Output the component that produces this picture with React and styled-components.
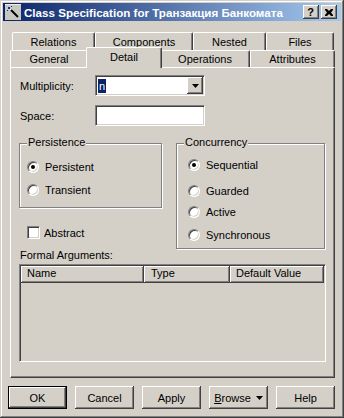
import React from 'react';
import styled, { createGlobalStyle, css } from 'styled-components';

const C = {
  face: '#D4D0C8',
  light: '#FFFFFF',
  shadow: '#808080',
  dark: '#404040',
  navy: '#0A246A',
};

const GlobalStyle = createGlobalStyle`
  html, body { margin: 0; padding: 0; background: ${C.face}; }
  body {
    font-family: "Liberation Sans", Arial, sans-serif;
    font-size: 11px;
    color: #000;
  }
  * { box-sizing: border-box; }
`;

const raised = css`
  box-shadow: inset -1px -1px ${C.dark}, inset 1px 1px ${C.light},
    inset -2px -2px ${C.shadow}, inset 2px 2px ${C.face};
`;

const sunken = css`
  border-top: 1px solid ${C.shadow};
  border-left: 1px solid ${C.shadow};
  border-bottom: 1px solid ${C.light};
  border-right: 1px solid ${C.light};
  box-shadow: inset 1px 1px ${C.dark}, inset -1px -1px ${C.face};
`;

const Window = styled.div`
  width: 344px;
  height: 418px;
  background: ${C.face};
  padding: 3px;
  box-shadow: inset -1px -1px ${C.dark}, inset 1px 1px ${C.face},
    inset -2px -2px ${C.shadow}, inset 2px 2px ${C.light};
  display: flex;
  flex-direction: column;
`;

const TitleBar = styled.div`
  height: 18px;
  display: flex;
  align-items: center;
  padding: 0 4px 0 2px;
  background: linear-gradient(to right, ${C.navy}, #a6caf0);
`;

const TitleText = styled.span`
  flex: 1;
  min-width: 0;
  margin-left: 3px;
  color: #fff;
  font-weight: bold;
  font-size: 11.6px;
  white-space: nowrap;
`;

const CaptionButton = styled.div`
  flex: none;
  width: 16px;
  height: 14px;
  margin-left: ${(p) => p.$gap}px;
  background: ${C.face};
  ${raised};
  display: flex;
  align-items: center;
  justify-content: center;
  font-weight: bold;
  font-size: 11px;
  line-height: 12px;
  padding-right: 1px;
`;

const Body = styled.div`
  flex: 1;
  display: flex;
  flex-direction: column;
  padding: 11px 6px 0 5px;
`;

const TabStrip = styled.div`
  position: relative;
  z-index: 1;
  margin-left: 2px;
  display: flex;
  flex-direction: column;
`;

const TabRow = styled.div`
  display: flex;
  align-items: flex-end;
  height: ${(p) => p.$h}px;
  padding-left: ${(p) => p.$inset}px;
`;

const Tab = styled.div`
  position: relative;
  width: ${(p) => p.$w}px;
  height: 100%;
  display: flex;
  align-items: center;
  justify-content: center;
  background: ${C.face};
  border-top: 1px solid ${C.light};
  border-left: 1px solid ${C.light};
  border-right: 1px solid ${C.dark};
  box-shadow: inset -1px 0 ${C.shadow};
  border-radius: 2px 2px 0 0;
  white-space: nowrap;
  ${(p) =>
    p.$active &&
    css`
      z-index: 2;
      height: 21px;
      margin: 0 -2px -1px;
      width: ${p.$w + 4}px;
      padding-bottom: 3px;
    `}
`;

const Page = styled.div`
  margin-left: 2px;
  height: 311px;
  border-top: 1px solid ${C.light};
  border-left: 1px solid ${C.light};
  border-right: 1px solid ${C.dark};
  border-bottom: 1px solid ${C.dark};
  box-shadow: inset -1px -1px ${C.shadow};
  padding: 7px 8px 0 8px;
  display: flex;
  flex-direction: column;
`;

const FieldRow = styled.div`
  display: flex;
  align-items: center;
  height: 21px;
  margin-top: ${(p) => p.$mt || 0}px;
`;

const FieldLabel = styled.span`
  width: 76px;
  padding-left: 1px;
`;

const Combo = styled.div`
  width: 110px;
  height: 21px;
  background: #fff;
  ${sunken};
  padding: 1px;
  display: flex;
  align-items: center;
  justify-content: space-between;
`;

const Selection = styled.span`
  height: 14px;
  line-height: 14px;
  padding: 0 1px;
  margin-left: 1px;
  background: ${C.navy};
  color: #fff;
`;

const DropButton = styled.div`
  width: 16px;
  height: 17px;
  background: ${C.face};
  ${raised};
  display: flex;
  align-items: center;
  justify-content: center;
`;

const TextInput = styled.div`
  width: 110px;
  height: 21px;
  background: #fff;
  ${sunken};
`;

const Columns = styled.div`
  display: grid;
  grid-template-columns: 143px 149px;
  column-gap: 14px;
  margin-top: 17px;
  align-items: start;
`;

const LeftColumn = styled.div`
  display: flex;
  flex-direction: column;
`;

const Group = styled.div`
  position: relative;
  height: ${(p) => p.$h}px;
  border: 1px solid ${C.shadow};
  box-shadow: inset 1px 1px ${C.light}, 1px 1px ${C.light};
  padding-left: ${(p) => p.$pl}px;
  display: flex;
  flex-direction: column;
`;

const Legend = styled.span`
  position: absolute;
  top: -8px;
  left: 7px;
  padding: 0 1px;
  line-height: 13px;
  background: ${C.face};
`;

const Option = styled.div`
  display: flex;
  align-items: center;
  gap: 6px;
  height: 16px;
  margin-top: ${(p) => p.$mt}px;
`;

const Radio = styled.span`
  position: relative;
  width: 12px;
  height: 12px;
  border-radius: 50%;
  background: #fff;
  border: 1px solid;
  border-color: ${C.shadow} ${C.light} ${C.light} ${C.shadow};
  box-shadow: inset 1px 1px ${C.dark}, inset -1px -1px ${C.face};
  ${(p) =>
    p.$checked &&
    css`
      &::after {
        content: '';
        position: absolute;
        left: 3px;
        top: 3px;
        width: 4px;
        height: 4px;
        border-radius: 50%;
        background: #000;
      }
    `}
`;

const CheckRow = styled.div`
  display: flex;
  align-items: center;
  gap: 4px;
  height: 13px;
  margin-top: 18px;
  padding-left: 8px;
`;

const CheckBox = styled.span`
  width: 13px;
  height: 13px;
  background: #fff;
  ${sunken};
`;

const SectionLabel = styled.div`
  line-height: 13px;
  padding-left: 1px;
`;

const ListView = styled.div`
  margin-top: 2px;
  height: 98px;
  background: ${C.face};
  ${sunken};
  padding: 1px;
`;

const HeaderRow = styled.div`
  display: flex;
  height: 17px;
`;

const HeaderCell = styled.div`
  width: ${(p) => p.$w}px;
  height: 17px;
  line-height: 15px;
  padding-left: ${(p) => p.$pl}px;
  background: ${C.face};
  ${raised};
  white-space: nowrap;
`;

const ButtonRow = styled.div`
  display: flex;
  gap: 8px;
  margin-top: 8px;
`;

const Button = styled.div`
  width: 59px;
  height: 23px;
  display: flex;
  align-items: center;
  justify-content: center;
  gap: 5px;
  background: ${C.face};
  ${raised};
  ${(p) =>
    p.$default &&
    css`
      border: 1px solid #000;
      box-shadow: inset -1px -1px ${C.dark}, inset 1px 1px ${C.light},
        inset -2px -2px ${C.shadow};
    `}
`;

const Mnemonic = styled.span`
  text-decoration: underline;
`;

const AppIcon = () => (
  <svg width="16" height="16" viewBox="0 0 16 16" style={{ flex: 'none' }}>
    <rect x="0" y="0" width="16" height="16" fill="#c8c8c0" />
    <rect x="0" y="0" width="16" height="1" fill="#eeeeee" />
    <line x1="6" y1="6" x2="13" y2="13" stroke="#000" strokeWidth="2" />
    <rect x="3" y="3" width="2" height="2" fill="#1030a0" />
    <rect x="2" y="6" width="1" height="1" fill="#1030a0" />
    <rect x="6" y="2" width="1" height="1" fill="#1030a0" />
    <rect x="5" y="5" width="1" height="1" fill="#fff" />
  </svg>
);

const CloseGlyph = () => (
  <svg width="8" height="7" viewBox="0 0 8 7">
    <path d="M0 0h2l2 2 2-2h2v1L6 3.5 8 6v1H6L4 5 2 7H0V6l2-2.5L0 1z" fill="#000" />
  </svg>
);

const ArrowDown = ({ w = 7 }) => (
  <svg width={w} height={Math.ceil(w / 2)} viewBox={`0 0 ${w} ${Math.ceil(w / 2)}`}>
    <polygon points={`0,0 ${w},0 ${w / 2},${Math.ceil(w / 2)}`} fill="#000" />
  </svg>
);

const backTabs = [
  { label: 'Relations', w: 83 },
  { label: 'Components', w: 98 },
  { label: 'Nested', w: 73 },
  { label: 'Files', w: 68 },
];

const frontTabs = [
  { label: 'General', w: 78 },
  { label: 'Detail', w: 72, active: true },
  { label: 'Operations', w: 90 },
  { label: 'Attributes', w: 85 },
];

const columns = [
  { label: 'Name', w: 123, pl: 6 },
  { label: 'Type', w: 86, pl: 7 },
  { label: 'Default Value', w: 94, pl: 6 },
];

export default function App() {
  return (
    <>
      <GlobalStyle />
      <Window>
        <TitleBar>
          <AppIcon />
          <TitleText>Class Specification for Транзакция Банкомата</TitleText>
          <CaptionButton $gap={0}>?</CaptionButton>
          <CaptionButton $gap={2}>
            <CloseGlyph />
          </CaptionButton>
        </TitleBar>
        <Body>
          <TabStrip>
            <TabRow $h={18} $inset={2}>
              {backTabs.map((t) => (
                <Tab key={t.label} $w={t.w}>
                  {t.label}
                </Tab>
              ))}
            </TabRow>
            <TabRow $h={17} $inset={0}>
              {frontTabs.map((t) => (
                <Tab key={t.label} $w={t.w} $active={t.active}>
                  {t.label}
                </Tab>
              ))}
            </TabRow>
          </TabStrip>
          <Page>
            <FieldRow>
              <FieldLabel>Multiplicity:</FieldLabel>
              <Combo>
                <Selection>n</Selection>
                <DropButton>
                  <ArrowDown w={7} />
                </DropButton>
              </Combo>
            </FieldRow>
            <FieldRow $mt={9}>
              <FieldLabel>Space:</FieldLabel>
              <TextInput />
            </FieldRow>
            <Columns>
              <LeftColumn>
                <Group $h={65} $pl={7}>
                  <Legend>Persistence</Legend>
                  <Option $mt={15}>
                    <Radio $checked />
                    Persistent
                  </Option>
                  <Option $mt={7}>
                    <Radio />
                    Transient
                  </Option>
                </Group>
                <CheckRow>
                  <CheckBox />
                  Abstract
                </CheckRow>
              </LeftColumn>
              <Group $h={106} $pl={11}>
                <Legend>Concurrency</Legend>
                <Option $mt={13}>
                  <Radio $checked />
                  Sequential
                </Option>
                <Option $mt={10}>
                  <Radio />
                  Guarded
                </Option>
                <Option $mt={5}>
                  <Radio />
                  Active
                </Option>
                <Option $mt={7}>
                  <Radio />
                  Synchronous
                </Option>
              </Group>
            </Columns>
            <SectionLabel>Formal Arguments:</SectionLabel>
            <ListView>
              <HeaderRow>
                {columns.map((c) => (
                  <HeaderCell key={c.label} $w={c.w} $pl={c.pl}>
                    {c.label}
                  </HeaderCell>
                ))}
              </HeaderRow>
            </ListView>
          </Page>
          <ButtonRow>
            <Button $default>OK</Button>
            <Button>Cancel</Button>
            <Button>Apply</Button>
            <Button>
              <span>
                <Mnemonic>B</Mnemonic>rowse
              </span>
              <ArrowDown w={7} />
            </Button>
            <Button>Help</Button>
          </ButtonRow>
        </Body>
      </Window>
    </>
  );
}
